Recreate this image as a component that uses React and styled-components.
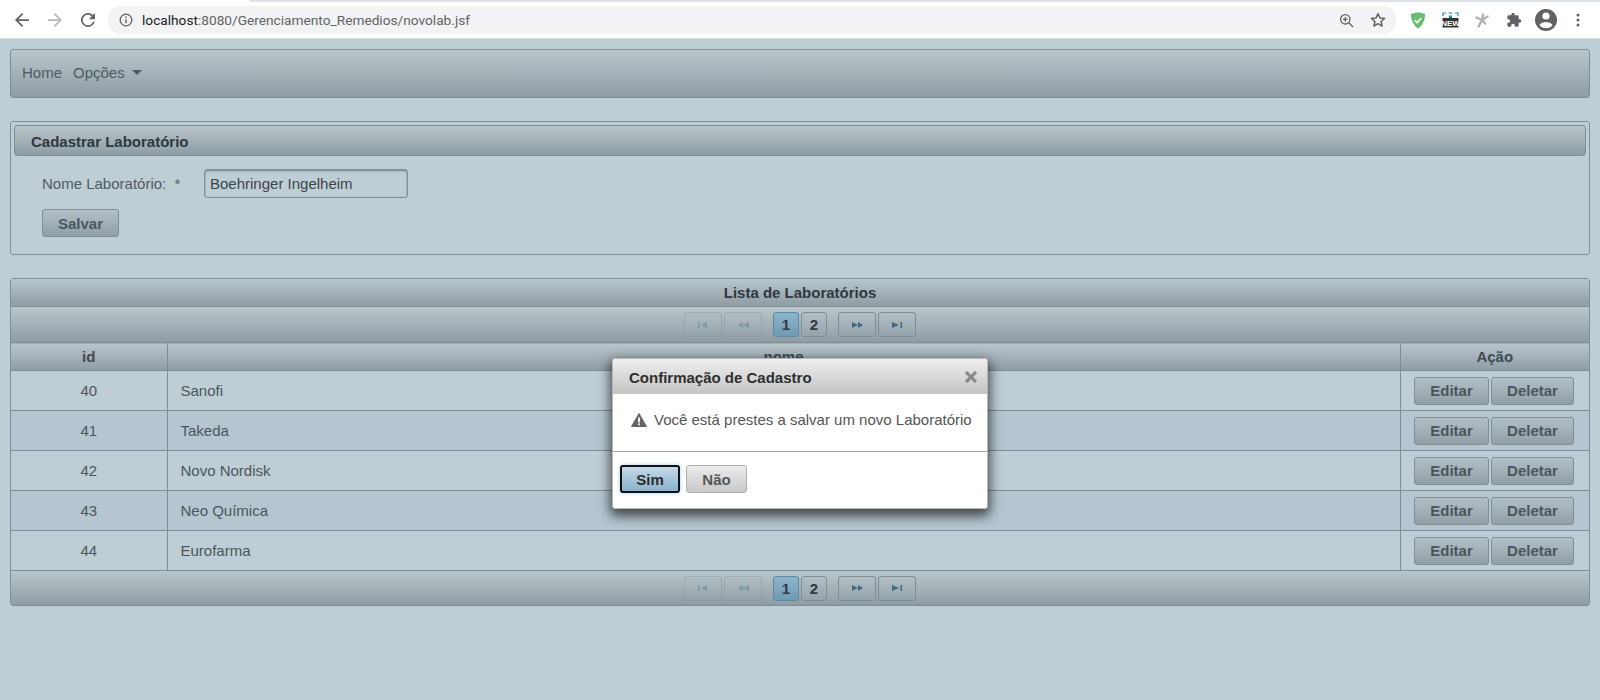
import React from 'react'
import styled, { createGlobalStyle } from 'styled-components'

const GlobalStyle = createGlobalStyle`
  html, body {
    margin: 0;
    padding: 0;
    height: 100%;
    background: #bfcdd4;
    font-family: "Liberation Sans", Arial, sans-serif;
    overflow: hidden;
  }
`

const barGradient = 'linear-gradient(to bottom, #b9c6cc 0%, #8f9ca3 100%)'
const borderColor = '#7f8d94'

const Page = styled.div`
  position: relative;
  width: 1600px;
  height: 700px;
  background: #bfcdd4;
`

const BrowserBar = styled.div`
  height: 39px;
  box-sizing: border-box;
  padding-top: 2px;
  background: linear-gradient(#dee1e6, #dee1e6) 250px 0 / 100% 2px no-repeat, #fff;
  border-bottom: 1px solid #d3dadd;
  display: flex;
  align-items: center;
`

const NavIcon = styled.div`
  width: 33px;
  height: 24px;
  display: flex;
  align-items: center;
  justify-content: center;
`

const NavIcons = styled.div`
  display: flex;
  margin-left: 5px;
  margin-right: 4px;
`

const Omnibox = styled.div`
  width: 1288px;
  height: 28px;
  background: #f1f3f4;
  border-radius: 14px;
  display: flex;
  align-items: center;
  padding: 0 2px 0 11px;
  box-sizing: border-box;
  font-size: 13.7px;
  font-family: "Roboto", "Liberation Sans", sans-serif;
  color: #5f6368;
`

const OmniText = styled.span`
  margin-left: 9px;
  flex: 1;
  b {
    font-weight: 400;
    color: #202124;
  }
`

const OmniAction = styled.div`
  width: 32px;
  display: flex;
  justify-content: center;
`

const Extensions = styled.div`
  display: flex;
  align-items: center;
  margin-left: 6px;
`

const ExtIcon = styled.div`
  width: 32px;
  height: 28px;
  display: flex;
  align-items: center;
  justify-content: center;
`

const Content = styled.div`
  padding: 10px 10px 0;
`

const MenuBar = styled.nav`
  height: 49px;
  box-sizing: border-box;
  border: 1px solid ${borderColor};
  border-radius: 3px;
  background: ${barGradient};
  display: flex;
  align-items: center;
  padding: 0 0 2px 11px;
  gap: 11px;
  font-size: 15px;
  color: #4f5b62;
`

const MenuItem = styled.span`
  display: flex;
  align-items: center;
  gap: 7px;
`

const Caret = styled.i`
  width: 0;
  height: 0;
  border-left: 5px solid transparent;
  border-right: 5px solid transparent;
  border-top: 5px solid #4f5b62;
`

const Panel = styled.section`
  margin-top: 23px;
  height: 134px;
  box-sizing: border-box;
  border: 1px solid ${borderColor};
  border-radius: 3px;
  padding: 3px;
`

const PanelTitle = styled.h2`
  margin: 0;
  height: 31px;
  box-sizing: border-box;
  border: 1px solid ${borderColor};
  border-radius: 3px;
  background: ${barGradient};
  padding-left: 16px;
  font-size: 15px;
  font-weight: 700;
  line-height: 32px;
  color: #2f383e;
`

const FormRow = styled.div`
  display: flex;
  align-items: center;
  margin: 13px 0 0 28px;
`

const Label = styled.label`
  width: 162px;
  font-size: 15px;
  color: #4f5b62;
  white-space: nowrap;
`

const TextInput = styled.div`
  width: 204px;
  height: 29px;
  box-sizing: border-box;
  border: 1px solid ${borderColor};
  border-radius: 3px;
  box-shadow: inset 0 1px 2px rgba(60, 70, 78, 0.55);
  padding-left: 5px;
  font-size: 15px;
  line-height: 27px;
  color: #3a454c;
`

const Button = styled.button`
  height: 28px;
  width: ${p => p.$width}px;
  padding: 0;
  box-sizing: border-box;
  border: 1px solid ${borderColor};
  border-radius: 3px;
  background: linear-gradient(to bottom, #b2bfc6 0%, #929fa6 100%);
  font-family: inherit;
  font-size: 15px;
  font-weight: 700;
  color: #4b575e;
  cursor: pointer;
`

const SaveButton = styled(Button)`
  display: block;
  margin: 11px 0 0 28px;
`

const ListBox = styled.section`
  margin-top: 23px;
  border: 1px solid ${borderColor};
  border-radius: 3px;
`

const ListTitle = styled.div`
  height: 27px;
  border-bottom: 1px solid ${borderColor};
  background: ${barGradient};
  text-align: center;
  font-size: 15px;
  font-weight: 700;
  line-height: 28px;
  color: #2f383e;
`

const Paginator = styled.div`
  height: ${p => p.$height}px;
  box-sizing: border-box;
  background: ${barGradient};
  display: flex;
  align-items: center;
  justify-content: center;
  gap: 2px;
`

const PageButton = styled.span`
  width: ${p => (p.$arrow ? 38 : 26)}px;
  height: 25px;
  box-sizing: border-box;
  margin-left: ${p => p.$gap || 0}px;
  border: 1px solid ${p => (p.$active ? '#5f8aa3' : '#7f8d94')};
  border-radius: 3px;
  opacity: ${p => (p.$disabled ? 0.35 : 1)};
  background: ${p => (p.$active ? 'linear-gradient(to bottom, #8db4cb, #6f9ab5)' : 'transparent')};
  display: flex;
  align-items: center;
  justify-content: center;
  font-size: 15px;
  font-weight: 700;
  color: #2f3a42;
`

const Table = styled.table`
  width: 100%;
  border-collapse: collapse;
  table-layout: fixed;
`

const Th = styled.th`
  height: 27px;
  padding: 0;
  background: ${barGradient};
  border-top: 1px solid ${borderColor};
  border-bottom: 1px solid ${borderColor};
  border-left: 1px solid ${borderColor};
  font-size: 15px;
  font-weight: 700;
  color: #3f4a51;
  &:first-child {
    border-left: 0;
  }
`

const Row = styled.tr`
  background: ${p => (p.$odd ? '#b5c6d0' : '#bfcdd4')};
`

const Td = styled.td`
  height: 39px;
  padding: 0 0 0 ${p => p.$pad || 0}px;
  border-bottom: 1px solid ${borderColor};
  border-left: 1px solid ${borderColor};
  font-size: 15px;
  color: #4a565d;
  text-align: ${p => p.$align || 'left'};
  &:first-child {
    border-left: 0;
  }
`

const Actions = styled.div`
  display: flex;
  justify-content: flex-end;
  gap: 2px;
  padding-right: 15px;
`

const Dialog = styled.div`
  position: absolute;
  left: 612px;
  top: 358px;
  width: 376px;
  height: 151px;
  box-sizing: border-box;
  background: #fff;
  border: 1px solid #b8b8b8;
  border-radius: 3px;
  box-shadow: 0 5px 12px 2px rgba(0, 0, 0, 0.65);
`

const DialogHeader = styled.div`
  height: 35px;
  box-sizing: border-box;
  padding: 1px 10px 0 16px;
  background: linear-gradient(to bottom, #eeeeee 0%, #c4c4c4 100%);
  border-radius: 3px 3px 0 0;
  display: flex;
  align-items: center;
  justify-content: space-between;
  font-size: 15px;
  font-weight: 700;
  color: #2e2e2e;
`

const CloseIcon = styled.span`
  display: flex;
`

const DialogBody = styled.div`
  height: 58px;
  box-sizing: border-box;
  padding: 17px 0 0 18px;
  display: flex;
  align-items: flex-start;
  gap: 7px;
  font-size: 15px;
  color: #555;
  white-space: nowrap;
  border-bottom: 1px solid #a6a6a6;
  svg {
    margin-top: 2px;
  }
`

const DialogFooter = styled.div`
  display: flex;
  gap: 6px;
  padding: 13px 0 0 7px;
`

const YesButton = styled(Button)`
  border: 2px solid #111;
  background: linear-gradient(to bottom, #c4d9e6 0%, #8ab3cf 100%);
  color: #2c2c2c;
  box-shadow: 0 0 4px rgba(130, 190, 230, 0.7);
`

const NoButton = styled(Button)`
  border: 1px solid #b0b0b0;
  background: linear-gradient(to bottom, #ececec 0%, #c8c8c8 100%);
  color: #555;
`

const rows = [
  [40, 'Sanofi'],
  [41, 'Takeda'],
  [42, 'Novo Nordisk'],
  [43, 'Neo Química'],
  [44, 'Eurofarma'],
]

function PagerArrows({ kind }) {
  const c = '#3f6a85'
  const shapes = {
    first: <><rect x="1" y="1" width="1.6" height="6" /><polygon points="10,1 10,7 4,4" /></>,
    prev: <><polygon points="6,1 6,7 1,4" /><polygon points="12,1 12,7 6,4" /></>,
    next: <><polygon points="1,1 1,7 7,4" /><polygon points="7,1 7,7 12,4" /></>,
    last: <><polygon points="1,1 1,7 8,4" /><rect x="9.5" y="1" width="1.6" height="6" /></>,
  }
  return <svg width="13" height="8" viewBox="0 0 13 8" fill={c}>{shapes[kind]}</svg>
}

function Pager({ height }) {
  return (
    <Paginator $height={height}>
      <PageButton $arrow $disabled><PagerArrows kind="first" /></PageButton>
      <PageButton $arrow $disabled><PagerArrows kind="prev" /></PageButton>
      <PageButton $active $gap={9}>1</PageButton>
      <PageButton>2</PageButton>
      <PageButton $arrow $gap={9}><PagerArrows kind="next" /></PageButton>
      <PageButton $arrow><PagerArrows kind="last" /></PageButton>
    </Paginator>
  )
}

function ChromeBar() {
  return (
    <BrowserBar>
      <NavIcons>
        <NavIcon>
          <svg width="14" height="14" viewBox="0 0 16 16" fill="#5f6368"><path d="M16 7H3.8l5.6-5.6L8 0 0 8l8 8 1.4-1.4L3.8 9H16z" /></svg>
        </NavIcon>
        <NavIcon>
          <svg width="14" height="14" viewBox="0 0 16 16" fill="#b5b8bb"><path d="M0 7h12.2L6.6 1.4 8 0l8 8-8 8-1.4-1.4L12.2 9H0z" /></svg>
        </NavIcon>
        <NavIcon>
          <svg width="14" height="14" viewBox="0 0 16 16" fill="#5f6368"><path d="M13.65 2.35A8 8 0 1 0 15.73 10h-2.08a6 6 0 1 1-1.42-6.22L9 7h7V0z" /></svg>
        </NavIcon>
      </NavIcons>
      <Omnibox>
        <svg width="14" height="14" viewBox="0 0 14 14" fill="none" stroke="#5f6368" strokeWidth="1.3">
          <circle cx="7" cy="7" r="5.8" />
          <path d="M7 6.2v4M7 3.6v1.4" strokeWidth="1.4" />
        </svg>
        <OmniText><b>localhost</b>:8080/Gerenciamento_Remedios/novolab.jsf</OmniText>
        <OmniAction>
          <svg width="15" height="15" viewBox="0 0 16 16" fill="none" stroke="#5f6368" strokeWidth="1.4">
            <circle cx="6.7" cy="6.7" r="5" />
            <path d="M10.4 10.4l4.6 4.6M4.2 6.7h5M6.7 4.2v5" />
          </svg>
        </OmniAction>
        <OmniAction>
          <svg width="16" height="16" viewBox="0 0 24 24" fill="none" stroke="#5f6368" strokeWidth="2.2" strokeLinejoin="round">
            <path d="M12 2.5l2.9 6.4 7 .7-5.3 4.6 1.6 6.9-6.2-3.6-6.2 3.6 1.6-6.9-5.3-4.6 7-.7z" />
          </svg>
        </OmniAction>
      </Omnibox>
      <Extensions>
        <ExtIcon>
          <svg width="16" height="17" viewBox="0 0 17 18">
            <path d="M8.5 0.5C11 0.5 14 1.2 16 2.2c0 6.5-2.5 12-7.5 15.3C3.5 14.2 1 8.7 1 2.2 3 1.2 6 0.5 8.5 0.5z" fill="#68bc71" />
            <path d="M5 8.5l2.6 2.6L12 6.5" fill="none" stroke="#fff" strokeWidth="1.8" />
          </svg>
        </ExtIcon>
        <ExtIcon>
          <svg width="17" height="16" viewBox="0 0 17 16">
            <path d="M1 4V1h3M6.5 1h4M13 1h3v3" fill="none" stroke="#1f8fa0" strokeWidth="1.2" />
            <rect x="0.5" y="6" width="16" height="9.5" fill="#333" />
            <rect x="7" y="3.5" width="3" height="2.5" fill="#1f8fa0" />
            <text x="8.5" y="14" textAnchor="middle" fontSize="8" fontWeight="700" fill="#fff" fontFamily="Liberation Sans">NEW</text>
          </svg>
        </ExtIcon>
        <ExtIcon>
          <svg width="14" height="15" viewBox="0 0 14 15" fill="none" stroke="#b2b2b2" strokeWidth="2.4" strokeLinecap="round">
            <path d="M8 1.5L7 7M1.5 4.5L7 7M12.5 3.5L7 7M7 7l3 3.5M7 7l-3.5 6.5" />
          </svg>
        </ExtIcon>
        <ExtIcon>
          <svg width="16" height="16" viewBox="0 0 24 24" fill="#5f6368">
            <path d="M20.5 11H19V7a2 2 0 0 0-2-2h-4V3.5a2.5 2.5 0 0 0-5 0V5H4a2 2 0 0 0-2 2v3.8h1.5a2.7 2.7 0 0 1 0 5.4H2V20a2 2 0 0 0 2 2h3.8v-1.5a2.7 2.7 0 0 1 5.4 0V22H17a2 2 0 0 0 2-2v-4h1.5a2.5 2.5 0 0 0 0-5z" />
          </svg>
        </ExtIcon>
        <ExtIcon>
          <svg width="22" height="22" viewBox="0 0 22 22" fill="#5f6368">
            <path d="M11 0a11 11 0 1 0 0 22 11 11 0 0 0 0-22zm0 3.4a3.6 3.6 0 1 1 0 7.2 3.6 3.6 0 0 1 0-7.2zm0 15.8a8.3 8.3 0 0 1-6.6-3.3c1.2-1.9 4-2.9 6.6-2.9s5.4 1 6.6 2.9a8.3 8.3 0 0 1-6.6 3.3z" />
          </svg>
        </ExtIcon>
        <ExtIcon>
          <svg width="4" height="14" viewBox="0 0 4 14" fill="#5f6368">
            <circle cx="2" cy="2" r="1.5" />
            <circle cx="2" cy="7" r="1.5" />
            <circle cx="2" cy="12" r="1.5" />
          </svg>
        </ExtIcon>
      </Extensions>
    </BrowserBar>
  )
}

export default function App() {
  return (
    <Page>
      <GlobalStyle />
      <ChromeBar />
      <Content>
        <MenuBar>
          <MenuItem>Home</MenuItem>
          <MenuItem>Opções <Caret /></MenuItem>
        </MenuBar>

        <Panel>
          <PanelTitle>Cadastrar Laboratório</PanelTitle>
          <FormRow>
            <Label>Nome Laboratório: &nbsp;*</Label>
            <TextInput>Boehringer Ingelheim</TextInput>
          </FormRow>
          <SaveButton $width={77}>Salvar</SaveButton>
        </Panel>

        <ListBox>
          <ListTitle>Lista de Laboratórios</ListTitle>
          <Pager height={35} />
          <Table>
            <colgroup>
              <col style={{ width: 156 }} />
              <col />
              <col style={{ width: 189 }} />
            </colgroup>
            <thead>
              <tr>
                <Th>id</Th>
                <Th>nome</Th>
                <Th>Ação</Th>
              </tr>
            </thead>
            <tbody>
              {rows.map(([id, name], i) => (
                <Row key={id} $odd={i % 2 === 1}>
                  <Td $align="center">{id}</Td>
                  <Td $pad={13}>{name}</Td>
                  <Td>
                    <Actions>
                      <Button $width={75}>Editar</Button>
                      <Button $width={83}>Deletar</Button>
                    </Actions>
                  </Td>
                </Row>
              ))}
            </tbody>
          </Table>
          <Pager height={34} />
        </ListBox>
      </Content>

      <Dialog>
        <DialogHeader>
          Confirmação de Cadastro
          <CloseIcon>
            <svg width="12" height="12" viewBox="0 0 12 12" stroke="#8a8a8a" strokeWidth="3.2"><path d="M1 1l10 10M11 1L1 11" /></svg>
          </CloseIcon>
        </DialogHeader>
        <DialogBody>
          <svg width="16" height="14" viewBox="0 0 16 14">
            <path d="M8 0.5l7.5 13H0.5z" fill="#666" stroke="#666" strokeLinejoin="round" />
            <rect x="7.1" y="4.5" width="1.8" height="5" fill="#fff" />
            <rect x="7.1" y="10.4" width="1.8" height="1.8" fill="#fff" />
          </svg>
          Você está prestes a salvar um novo Laboratório
        </DialogBody>
        <DialogFooter>
          <YesButton $width={60}>Sim</YesButton>
          <NoButton $width={61}>Não</NoButton>
        </DialogFooter>
      </Dialog>
    </Page>
  )
}
